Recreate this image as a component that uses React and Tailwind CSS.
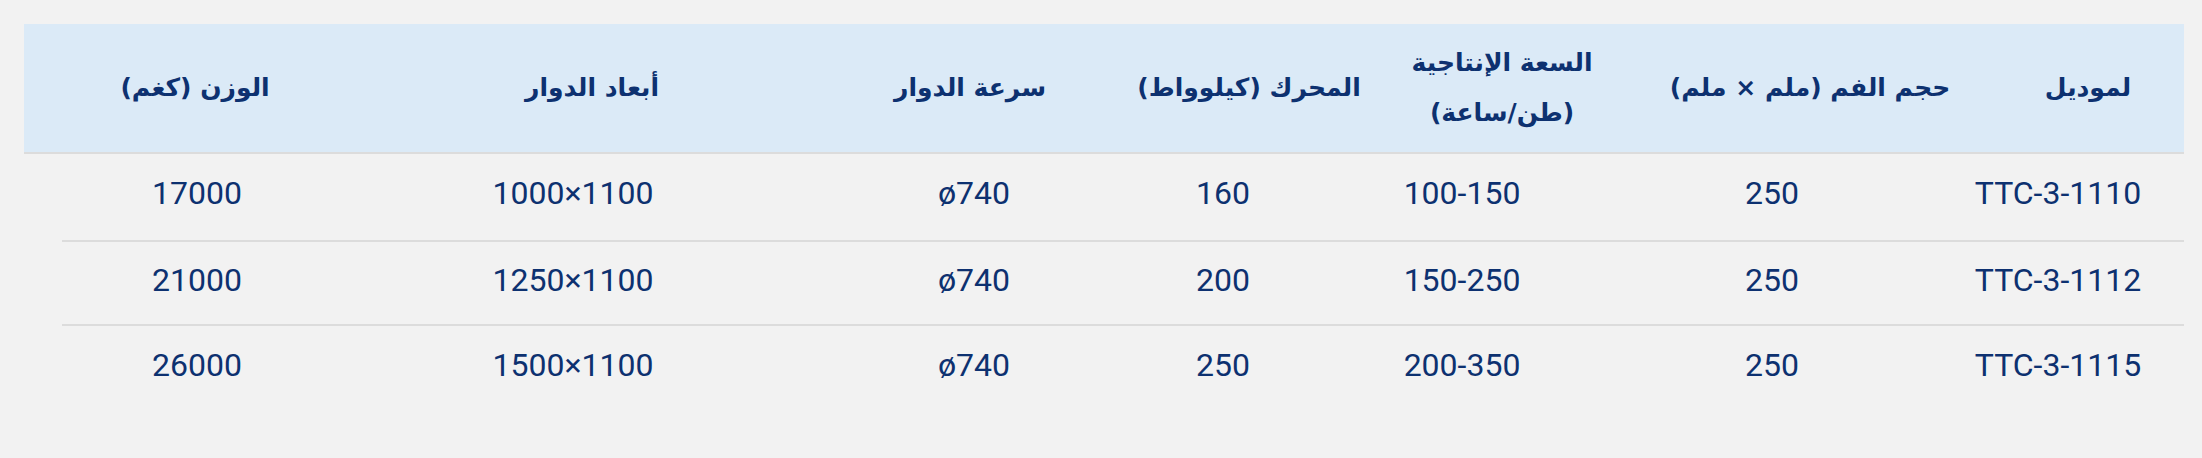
import React from "react";

const headers = [
  ["لموديل"],
  ["حجم الفم (ملم × ملم)"],
  ["السعة الإنتاجية", "(طن/ساعة)"],
  ["المحرك (كيلوواط)"],
  ["سرعة الدوار"],
  ["أبعاد الدوار"],
  ["الوزن (كغم)"],
];

const rows = [
  ["TTC-3-1110", "250", "100-150", "160", "ø740", "1000×1100", "17000"],
  ["TTC-3-1112", "250", "150-250", "200", "ø740", "1250×1100", "21000"],
  ["TTC-3-1115", "250", "200-350", "250", "ø740", "1500×1100", "26000"],
];

export default function App() {
  return (
    <div
      dir="rtl"
      className="h-[458px] w-full bg-[#f2f2f2] pt-[24px] pl-[24px] pr-[18px] text-[#0d3170]"
      style={{ fontFamily: "Roboto, 'DejaVu Sans', sans-serif" }}
    >
      {/* header row */}
      <div className="grid h-[130px] grid-cols-[192px_364px_252px_254px_304px_452px_342px] border-b-2 border-[#dcdcdc] bg-[#dbeaf7]">
        {headers.map((lines, i) => (
          <div
            key={i}
            className="flex flex-col items-center justify-center text-center text-[25px] font-bold leading-[50px]"
            style={{ fontFamily: "'DejaVu Sans', sans-serif" }}
          >
            {lines.map((l) => (
              <span key={l}>{l}</span>
            ))}
          </div>
        ))}
      </div>

      {/* body rows */}
      <div className="ml-[38px]">
        {rows.map((r, ri) => (
          <div
            key={ri}
            className={`grid grid-cols-[252px_320px_300px_178px_320px_482px_270px] ${
              ri === 0 ? "h-[88px] pb-[8px]" : "h-[84px] pb-[6px]"
            } ${ri < rows.length - 1 ? "border-b-2 border-[#dcdcdc]" : ""}`}
          >
            {r.map((c, ci) => (
              <div key={ci} className="flex items-center justify-center text-[32px]" dir="ltr">
                {c}
              </div>
            ))}
          </div>
        ))}
      </div>
    </div>
  );
}
